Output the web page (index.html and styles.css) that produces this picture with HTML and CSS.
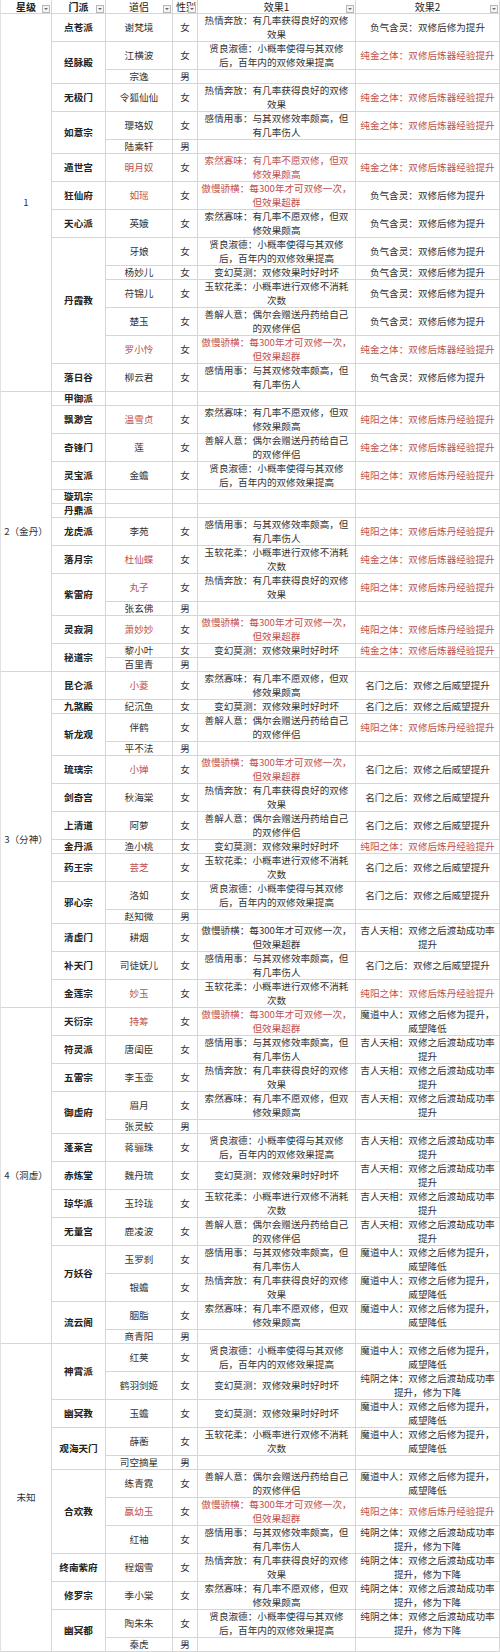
FILE: index.html
```html
<!DOCTYPE html>
<html lang="zh-CN">
<head>
<meta charset="utf-8">
<title>道侣</title>
<link rel="stylesheet" href="styles.css">
</head>
<body>
<div class="sheet">
  <div class="c h first bold">星级<span class="flt"></span></div>
  <div class="c h bold">门派<span class="flt"></span></div>
  <div class="c h">道侣<span class="flt"></span></div>
  <div class="c h left">性别<span class="flt"></span></div>
  <div class="c h">效果1<span class="flt"></span></div>
  <div class="c h">效果2<span class="flt"></span></div>

  <!-- 1 -->
  <div class="c star first r27">1</div>
  <div class="c sect r2">点苍派</div><div class="c r2">谢梵境</div><div class="c r2">女</div><div class="c r2">热情奔放：有几率获得良好的双修<br>效果</div><div class="c r2">负气含灵：双修后修为提升</div>
  <div class="c sect r3">经脉殿</div><div class="c r2">江横波</div><div class="c r2">女</div><div class="c r2">贤良淑德：小概率使得与其双修<br>后，百年内的双修效果提高</div><div class="c r2 red">纯金之体：双修后炼器经验提升</div>
  <div class="c">宗逸</div><div class="c">男</div><div class="c"></div><div class="c"></div>
  <div class="c sect r2">无极门</div><div class="c r2">令狐仙仙</div><div class="c r2">女</div><div class="c r2">热情奔放：有几率获得良好的双修<br>效果</div><div class="c r2 red">纯金之体：双修后炼器经验提升</div>
  <div class="c sect r3">如意宗</div><div class="c r2">璎珞奴</div><div class="c r2">女</div><div class="c r2">感情用事：与其双修效率颇高，但<br>有几率伤人</div><div class="c r2 red">纯金之体：双修后炼器经验提升</div>
  <div class="c">陆乘轩</div><div class="c">男</div><div class="c"></div><div class="c"></div>
  <div class="c sect r2">遁世宫</div><div class="c r2 red">明月奴</div><div class="c r2">女</div><div class="c r2 red">索然寡味：有几率不愿双修，但双<br>修效果颇高</div><div class="c r2 red">纯金之体：双修后炼器经验提升</div>
  <div class="c sect r2">狂仙府</div><div class="c r2 red">如瑶</div><div class="c r2">女</div><div class="c r2 red">傲慢骄横：每300年才可双修一次，<br>但效果超群</div><div class="c r2">负气含灵：双修后修为提升</div>
  <div class="c sect r2">天心派</div><div class="c r2">英娥</div><div class="c r2">女</div><div class="c r2">索然寡味：有几率不愿双修，但双<br>修效果颇高</div><div class="c r2">负气含灵：双修后修为提升</div>
  <div class="c sect r9">丹霞教</div><div class="c r2">牙娘</div><div class="c r2">女</div><div class="c r2">贤良淑德：小概率使得与其双修<br>后，百年内的双修效果提高</div><div class="c r2">负气含灵：双修后修为提升</div>
  <div class="c">杨妙儿</div><div class="c">女</div><div class="c">变幻莫测：双修效果时好时坏</div><div class="c">负气含灵：双修后修为提升</div>
  <div class="c r2">苻锦儿</div><div class="c r2">女</div><div class="c r2">玉软花柔：小概率进行双修不消耗<br>次数</div><div class="c r2">负气含灵：双修后修为提升</div>
  <div class="c r2">楚玉</div><div class="c r2">女</div><div class="c r2">善解人意：偶尔会赠送丹药给自己<br>的双修伴侣</div><div class="c r2">负气含灵：双修后修为提升</div>
  <div class="c r2 red">罗小怜</div><div class="c r2">女</div><div class="c r2 red">傲慢骄横：每300年才可双修一次，<br>但效果超群</div><div class="c r2 red">纯金之体：双修后炼器经验提升</div>
  <div class="c sect r2">落日谷</div><div class="c r2">柳云君</div><div class="c r2">女</div><div class="c r2">感情用事：与其双修效率颇高，但<br>有几率伤人</div><div class="c r2">负气含灵：双修后修为提升</div>

  <!-- 2 -->
  <div class="c star first r20">2（金丹）</div>
  <div class="c sect">甲御派</div><div class="c"></div><div class="c"></div><div class="c"></div><div class="c"></div>
  <div class="c sect r2">飘渺宫</div><div class="c r2 red">温雪贞</div><div class="c r2">女</div><div class="c r2">索然寡味：有几率不愿双修，但双<br>修效果颇高</div><div class="c r2 red">纯阳之体：双修后炼丹经验提升</div>
  <div class="c sect r2">奇锋门</div><div class="c r2">莲</div><div class="c r2">女</div><div class="c r2">善解人意：偶尔会赠送丹药给自己<br>的双修伴侣</div><div class="c r2 red">纯金之体：双修后炼器经验提升</div>
  <div class="c sect r2">灵宝派</div><div class="c r2">金蟾</div><div class="c r2">女</div><div class="c r2">贤良淑德：小概率使得与其双修<br>后，百年内的双修效果提高</div><div class="c r2 red">纯阳之体：双修后炼丹经验提升</div>
  <div class="c sect">璇玑宗</div><div class="c"></div><div class="c"></div><div class="c"></div><div class="c"></div>
  <div class="c sect">丹鼎派</div><div class="c"></div><div class="c"></div><div class="c"></div><div class="c"></div>
  <div class="c sect r2">龙虎派</div><div class="c r2">李苑</div><div class="c r2">女</div><div class="c r2">感情用事：与其双修效率颇高，但<br>有几率伤人</div><div class="c r2 red">纯阳之体：双修后炼丹经验提升</div>
  <div class="c sect r2">落月宗</div><div class="c r2 red">杜仙蝶</div><div class="c r2">女</div><div class="c r2">玉软花柔：小概率进行双修不消耗<br>次数</div><div class="c r2 red">纯金之体：双修后炼器经验提升</div>
  <div class="c sect r3">紫雷府</div><div class="c r2 red">丸子</div><div class="c r2">女</div><div class="c r2">热情奔放：有几率获得良好的双修<br>效果</div><div class="c r2 red">纯阳之体：双修后炼丹经验提升</div>
  <div class="c">张玄佛</div><div class="c">男</div><div class="c"></div><div class="c"></div>
  <div class="c sect r2">灵寂洞</div><div class="c r2 red">萧妙妙</div><div class="c r2">女</div><div class="c r2 red">傲慢骄横：每300年才可双修一次，<br>但效果超群</div><div class="c r2 red">纯阳之体：双修后炼丹经验提升</div>
  <div class="c sect r2">秘道宗</div><div class="c">黎小叶</div><div class="c">女</div><div class="c">变幻莫测：双修效果时好时坏</div><div class="c red">纯金之体：双修后炼器经验提升</div>
  <div class="c">百里青</div><div class="c">男</div><div class="c"></div><div class="c"></div>

  <!-- 3 -->
  <div class="c star first r24">3（分神）</div>
  <div class="c sect r2">昆仑派</div><div class="c r2 red">小菱</div><div class="c r2">女</div><div class="c r2">索然寡味：有几率不愿双修，但双<br>修效果颇高</div><div class="c r2">名门之后：双修之后威望提升</div>
  <div class="c sect">九煞殿</div><div class="c">纪沉鱼</div><div class="c">女</div><div class="c">变幻莫测：双修效果时好时坏</div><div class="c">名门之后：双修之后威望提升</div>
  <div class="c sect r3">斩龙观</div><div class="c r2">伴鹤</div><div class="c r2">女</div><div class="c r2">善解人意：偶尔会赠送丹药给自己<br>的双修伴侣</div><div class="c r2 red">纯阳之体：双修后炼丹经验提升</div>
  <div class="c">平不法</div><div class="c">男</div><div class="c"></div><div class="c"></div>
  <div class="c sect r2">琉璃宗</div><div class="c r2 red">小婵</div><div class="c r2">女</div><div class="c r2 red">傲慢骄横：每300年才可双修一次，<br>但效果超群</div><div class="c r2">名门之后：双修之后威望提升</div>
  <div class="c sect r2">剑奇宫</div><div class="c r2">秋海棠</div><div class="c r2">女</div><div class="c r2">热情奔放：有几率获得良好的双修<br>效果</div><div class="c r2">名门之后：双修之后威望提升</div>
  <div class="c sect r2">上清道</div><div class="c r2">阿萝</div><div class="c r2">女</div><div class="c r2">善解人意：偶尔会赠送丹药给自己<br>的双修伴侣</div><div class="c r2">名门之后：双修之后威望提升</div>
  <div class="c sect">金丹派</div><div class="c">渔小桃</div><div class="c">女</div><div class="c">变幻莫测：双修效果时好时坏</div><div class="c red">纯阳之体：双修后炼丹经验提升</div>
  <div class="c sect r2">药王宗</div><div class="c r2 red">芸芝</div><div class="c r2">女</div><div class="c r2">玉软花柔：小概率进行双修不消耗<br>次数</div><div class="c r2">名门之后：双修之后威望提升</div>
  <div class="c sect r3">邪心宗</div><div class="c r2">洛如</div><div class="c r2">女</div><div class="c r2">贤良淑德：小概率使得与其双修<br>后，百年内的双修效果提高</div><div class="c r2">名门之后：双修之后威望提升</div>
  <div class="c">赵知微</div><div class="c">男</div><div class="c"></div><div class="c"></div>
  <div class="c sect r2">清虚门</div><div class="c r2">耕烟</div><div class="c r2">女</div><div class="c r2">傲慢骄横：每300年才可双修一次，<br>但效果超群</div><div class="c r2">吉人天相：双修之后渡劫成功率<br>提升</div>
  <div class="c sect r2">补天门</div><div class="c r2">司徒妩儿</div><div class="c r2">女</div><div class="c r2">感情用事：与其双修效率颇高，但<br>有几率伤人</div><div class="c r2">名门之后：双修之后威望提升</div>
  <div class="c sect r2">金莲宗</div><div class="c r2 red">妙玉</div><div class="c r2">女</div><div class="c r2">玉软花柔：小概率进行双修不消耗<br>次数</div><div class="c r2 red">纯阳之体：双修后炼丹经验提升</div>

  <!-- 4 -->
  <div class="c star first r24">4（洞虚）</div>
  <div class="c sect r2">天衍宗</div><div class="c r2 red">持筹</div><div class="c r2">女</div><div class="c r2 red">傲慢骄横：每300年才可双修一次，<br>但效果超群</div><div class="c r2">魔道中人：双修之后修为提升，<br>威望降低</div>
  <div class="c sect r2">符灵派</div><div class="c r2">唐闺臣</div><div class="c r2">女</div><div class="c r2">感情用事：与其双修效率颇高，但<br>有几率伤人</div><div class="c r2">吉人天相：双修之后渡劫成功率<br>提升</div>
  <div class="c sect r2">五雷宗</div><div class="c r2">李玉壶</div><div class="c r2">女</div><div class="c r2">热情奔放：有几率获得良好的双修<br>效果</div><div class="c r2">吉人天相：双修之后渡劫成功率<br>提升</div>
  <div class="c sect r3">御虚府</div><div class="c r2">眉月</div><div class="c r2">女</div><div class="c r2">索然寡味：有几率不愿双修，但双<br>修效果颇高</div><div class="c r2">吉人天相：双修之后渡劫成功率<br>提升</div>
  <div class="c">张灵鲛</div><div class="c">男</div><div class="c"></div><div class="c"></div>
  <div class="c sect r2">蓬莱宫</div><div class="c r2">蒋骊珠</div><div class="c r2">女</div><div class="c r2">贤良淑德：小概率使得与其双修<br>后，百年内的双修效果提高</div><div class="c r2">吉人天相：双修之后渡劫成功率<br>提升</div>
  <div class="c sect r2">赤炼堂</div><div class="c r2">魏丹琉</div><div class="c r2">女</div><div class="c r2">变幻莫测：双修效果时好时坏</div><div class="c r2">吉人天相：双修之后渡劫成功率<br>提升</div>
  <div class="c sect r2">琼华派</div><div class="c r2">玉玲珑</div><div class="c r2">女</div><div class="c r2">玉软花柔：小概率进行双修不消耗<br>次数</div><div class="c r2">吉人天相：双修之后渡劫成功率<br>提升</div>
  <div class="c sect r2">无量宫</div><div class="c r2">鹿凌波</div><div class="c r2">女</div><div class="c r2">善解人意：偶尔会赠送丹药给自己<br>的双修伴侣</div><div class="c r2">吉人天相：双修之后渡劫成功率<br>提升</div>
  <div class="c sect r4">万妖谷</div><div class="c r2">玉罗刹</div><div class="c r2">女</div><div class="c r2">感情用事：与其双修效率颇高，但<br>有几率伤人</div><div class="c r2">魔道中人：双修之后修为提升，<br>威望降低</div>
  <div class="c r2">银蟾</div><div class="c r2">女</div><div class="c r2">热情奔放：有几率获得良好的双修<br>效果</div><div class="c r2">魔道中人：双修之后修为提升，<br>威望降低</div>
  <div class="c sect r3">流云阁</div><div class="c r2">胭脂</div><div class="c r2">女</div><div class="c r2">索然寡味：有几率不愿双修，但双<br>修效果颇高</div><div class="c r2">魔道中人：双修之后修为提升，<br>威望降低</div>
  <div class="c">商青阳</div><div class="c">男</div><div class="c"></div><div class="c"></div>

  <!-- 未知 -->
  <div class="c star first r22">未知</div>
  <div class="c sect r4">神霄派</div><div class="c r2">红荚</div><div class="c r2">女</div><div class="c r2">贤良淑德：小概率使得与其双修<br>后，百年内的双修效果提高</div><div class="c r2">魔道中人：双修之后修为提升，<br>威望降低</div>
  <div class="c r2">鹤羽剑姬</div><div class="c r2">女</div><div class="c r2">变幻莫测：双修效果时好时坏</div><div class="c r2">纯阴之体：双修之后渡劫成功率<br>提升，修为下降</div>
  <div class="c sect r2">幽冥教</div><div class="c r2">玉蟾</div><div class="c r2">女</div><div class="c r2">变幻莫测：双修效果时好时坏</div><div class="c r2">魔道中人：双修之后修为提升，<br>威望降低</div>
  <div class="c sect r3">观海天门</div><div class="c r2">薛蘅</div><div class="c r2">女</div><div class="c r2">玉软花柔：小概率进行双修不消耗<br>次数</div><div class="c r2">魔道中人：双修之后修为提升，<br>威望降低</div>
  <div class="c">司空摘星</div><div class="c">男</div><div class="c"></div><div class="c"></div>
  <div class="c sect r6">合欢教</div><div class="c r2">练青霓</div><div class="c r2">女</div><div class="c r2">善解人意：偶尔会赠送丹药给自己<br>的双修伴侣</div><div class="c r2">魔道中人：双修之后修为提升，<br>威望降低</div>
  <div class="c r2 red">嬴幼玉</div><div class="c r2">女</div><div class="c r2 red">傲慢骄横：每300年才可双修一次，<br>但效果超群</div><div class="c r2 red">纯阳之体：双修后炼丹经验提升</div>
  <div class="c r2">红袖</div><div class="c r2">女</div><div class="c r2">感情用事：与其双修效率颇高，但<br>有几率伤人</div><div class="c r2">纯阴之体：双修之后渡劫成功率<br>提升，修为下降</div>
  <div class="c sect r2">终南紫府</div><div class="c r2">程烟雪</div><div class="c r2">女</div><div class="c r2">热情奔放：有几率获得良好的双修<br>效果</div><div class="c r2">纯阴之体：双修之后渡劫成功率<br>提升，修为下降</div>
  <div class="c sect r2">修罗宗</div><div class="c r2">季小棠</div><div class="c r2">女</div><div class="c r2">索然寡味：有几率不愿双修，但双<br>修效果颇高</div><div class="c r2">纯阴之体：双修之后渡劫成功率<br>提升，修为下降</div>
  <div class="c sect r3">幽冥都</div><div class="c r2">陶朱朱</div><div class="c r2">女</div><div class="c r2">贤良淑德：小概率使得与其双修<br>后，百年内的双修效果提高</div><div class="c r2">纯阴之体：双修之后渡劫成功率<br>提升，修为下降</div>
  <div class="c">秦虎</div><div class="c">男</div><div class="c"></div><div class="c"></div>
</div>
</body>
</html>
```

FILE: styles.css
```css
html, body {
  margin: 0;
  padding: 0;
  background: #ffffff;
}

.sheet {
  display: grid;
  grid-template-columns: 52px 54px 67px 25px 158px 144px;
  grid-auto-rows: 14px;
  width: 500px;
  font-family: "Noto Sans CJK SC", "Noto Sans", sans-serif;
  font-size: 9.6px;
  color: #333333;
}

.c {
  box-sizing: border-box;
  border-right: 1px solid #d6d6d6;
  border-bottom: 1px solid #d6d6d6;
  display: flex;
  align-items: center;
  justify-content: center;
  text-align: center;
  white-space: nowrap;
  line-height: 13.5px;
  overflow: hidden;
}

.first {
  border-left: 1px solid #e2e2e2;
}

.h {
  position: relative;
  color: #222222;
  font-size: 10px;
}

.h.left {
  justify-content: flex-start;
  padding-left: 3px;
}

.bold {
  font-weight: 700;
}

.flt {
  position: absolute;
  right: 1px;
  top: 5px;
  width: 8px;
  height: 8px;
  box-sizing: border-box;
  border: 1px solid #b8b8b8;
  background: #f4f4f4;
}

.flt::after {
  content: "";
  position: absolute;
  left: 1px;
  top: 2px;
  border-left: 2px solid transparent;
  border-right: 2px solid transparent;
  border-top: 2px solid #666666;
}

.star {
  color: #333333;
}

.sect {
  font-weight: 700;
  color: #222222;
}

.red {
  color: #c0504d;
}

.r2 { grid-row: span 2; }
.r3 { grid-row: span 3; }
.r4 { grid-row: span 4; }
.r6 { grid-row: span 6; }
.r9 { grid-row: span 9; }
.r20 { grid-row: span 20; }
.r22 { grid-row: span 22; }
.r24 { grid-row: span 24; }
.r27 { grid-row: span 27; }
```
